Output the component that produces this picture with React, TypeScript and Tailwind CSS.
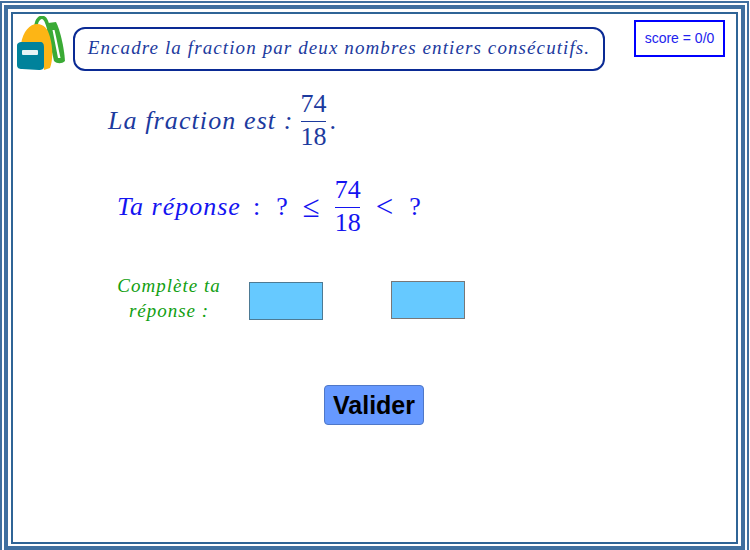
const serif = { fontFamily: '"Liberation Serif", serif' };

function Backpack() {
  return (
    <svg width="50" height="54" viewBox="0 0 50 54" className="mt-[2px] shrink-0">
      <path d="M19 11 C19 3 24 0 27 2 C30 4 30 8 32 13" fill="none" stroke="#3aaa35" strokeWidth="3.5" />
      <path d="M31 7 L39 6 C43 14 47 30 48 45 C45 48 40 48 37 45 L30 14 Z" fill="#3aaa35" />
      <path d="M35.5 14 L37.5 14 C39.5 22 41.5 33 43.5 42 L41 42 Z" fill="#fff" />
      <path d="M4 28 C6 15 13 8 20 8 C27 8 31 13 33 21 C36 32 36 44 33 52 L27 54 L24 27 L4 27 Z" fill="#fdb515" />
      <path d="M0 30 C0 27 2 26 5 26 L23 26 C26 26 27 28 27 31 L27 50 C27 53 25 54 22 54 L5 53 C2 53 0 52 0 49 Z" fill="#00829b" />
      <rect x="5" y="34" width="16" height="5" rx="1" fill="#e8f4f6" />
    </svg>
  );
}

function Fraction({ className }: { className: string }) {
  return (
    <span className={`inline-flex flex-col items-center not-italic tracking-normal ${className}`}>
      <span className="mb-[4px] leading-[27px]">74</span>
      <span className="h-px w-[25px] bg-current" />
      <span className="leading-[29px]">18</span>
    </span>
  );
}

export default function App() {
  return (
    <div className="h-[550px] w-[750px] overflow-hidden bg-white pt-[1px]" style={serif}>
      <div className="h-full w-[749px] border-x-2 border-t-2 border-[#3f6f9f] px-[2px] pt-[2px]">
        <div className="h-full border-4 border-[#3f6f9f] p-[3px] pb-[2px]">
          <div className="h-full border-2 border-[#2f6496] bg-white">
            <div className="flex items-start pl-[4px]">
              <Backpack />
              <div className="ml-[6px] mt-[13px] flex h-[44px] w-[532px] items-center justify-center rounded-[12px] border-2 border-[#0a2a94] pb-[2px] text-[19px] italic tracking-[1.1px] text-[#1c3a9e]">
                Encadre la fraction par deux nombres entiers consécutifs.
              </div>
              <div className="ml-[29px] mt-[6px] flex h-[37px] w-[91px] items-center justify-center border-2 border-[#0000ff] font-['Liberation_Sans',sans-serif] text-[14px] text-[#2222ee]">
                score = 0/0
              </div>
            </div>

            <div className="ml-[95px] mt-[19px] flex h-[60px] items-center text-[26px] italic tracking-[1.1px] text-[#1c3a9e]">
              La fraction est :
              <Fraction className="mx-[7px]" />
              <span className="-ml-[4px] not-italic">.</span>
            </div>

            <div className="ml-[104px] mt-[26px] flex h-[60px] items-center text-[26px] italic tracking-[1px] text-[#1414f0]">
              <span>Ta réponse</span>
              <span className="ml-[12px] not-italic">:</span>
              <span className="ml-[15px] not-italic">?</span>
              <span className="ml-[14px] text-[31px] leading-none not-italic">≤</span>
              <Fraction className="ml-[14px]" />
              <span className="ml-[15px] text-[31px] leading-none not-italic">&lt;</span>
              <span className="ml-[15px] not-italic">?</span>
            </div>

            <div className="ml-[96px] mt-[35px] flex items-start">
              <div className="mt-[2px] w-[120px] text-center text-[19px] italic leading-[25px] tracking-[1px] text-[#12a012]">
                Complète ta
                <br />
                réponse :
              </div>
              <div className="ml-[20px] mt-[11px] h-[38px] w-[74px] border border-[#4d7a94] bg-[#66c9ff]" />
              <div className="ml-[68px] mt-[10px] h-[38px] w-[74px] border border-[#777] bg-[#66c9ff]" />
            </div>

            <div className="mt-[62px] flex justify-center pr-[1px]">
              <button className="h-[40px] w-[100px] rounded-[4px] border border-[#4f78c8] bg-[#6699ff] pt-[1px] font-['Liberation_Sans',sans-serif] text-[25px] font-bold text-black">
                Valider
              </button>
            </div>
          </div>
        </div>
      </div>
    </div>
  );
}
